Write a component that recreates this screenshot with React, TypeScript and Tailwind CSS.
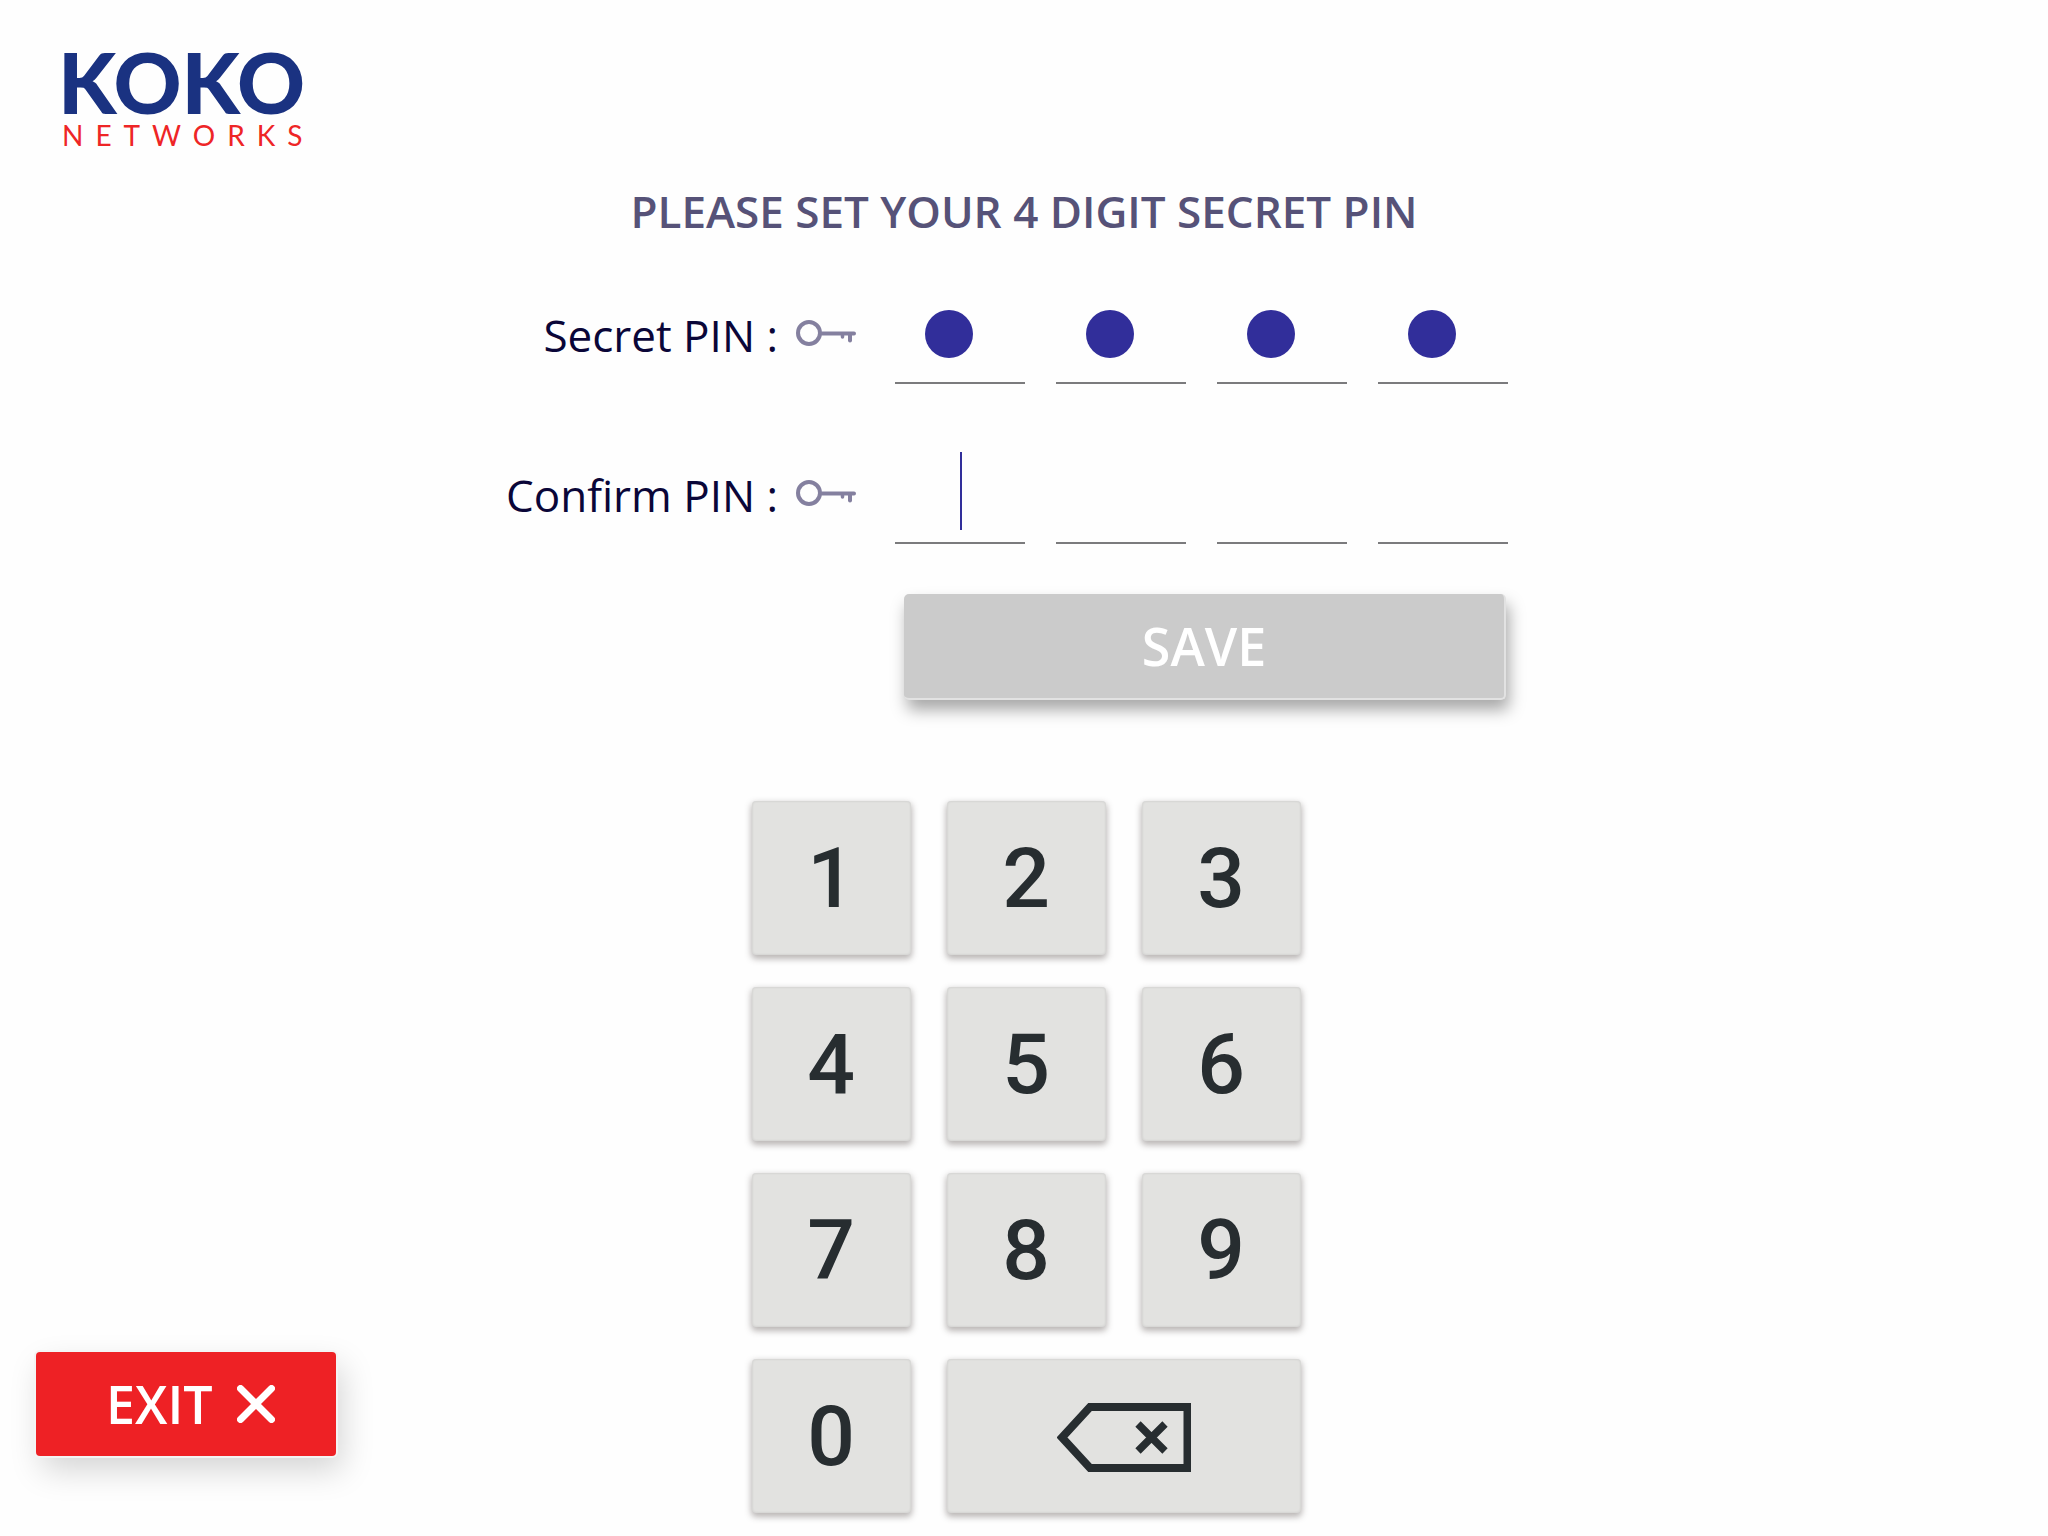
import { useState } from "react";

function Logo() {
  return (
    <a href="#" aria-label="KOKO Networks" className="flex w-fit flex-col pt-[43px] pl-[58px] font-['Lato']">
      <span className="text-[84px] leading-[78px] font-black text-[#1a3281]">KOKO</span>
      <span className="pl-1 text-[28px] leading-[28px] tracking-[12px] text-[#ee2526]">NETWORKS</span>
    </a>
  );
}

function KeyIcon() {
  return (
    <svg viewBox="0 0 60 28" className="h-7 w-[60px]" fill="none" stroke="#84809f" aria-hidden="true">
      <circle cx="13" cy="13" r="11" strokeWidth="4" />
      <path d="M26 13.5H58" strokeWidth="4" strokeLinecap="round" />
      <path d="M46.5 14V17" strokeWidth="3.5" strokeLinecap="round" />
      <path d="M54 14V20.5" strokeWidth="4" strokeLinecap="round" />
    </svg>
  );
}

function PinRow({ id, label, value, active }: { id: string; label: string; value: string; active: boolean }) {
  return (
    <div className="flex items-center">
      <label htmlFor={`${id}-0`} className="w-[272px] pb-[2px] text-right text-[44px] leading-[60px] whitespace-nowrap text-[#0a0638]">
        {label}
      </label>
      <div className="mr-[39px] ml-[18px] pb-1">
        <KeyIcon />
      </div>
      <div className="grid grid-cols-4 gap-[31px]">
        {[0, 1, 2, 3].map((i) => (
          <div key={i} className="relative">
            <input
              id={`${id}-${i}`}
              type="password"
              readOnly
              value={value[i] ?? ""}
              aria-label={`${label} digit ${i + 1}`}
              className="block h-24 w-[130px] border-b-2 border-[#7b7b7d] bg-transparent text-transparent outline-none"
            />
            {value[i] && <span className="absolute top-[22px] left-[30px] size-12 rounded-full bg-[#312e9a]" />}
            {active && i === value.length && <span className="absolute top-1 left-[65px] h-[78px] w-[2px] bg-[#312e9a]" />}
          </div>
        ))}
      </div>
    </div>
  );
}

const keyStyle =
  "flex h-[154px] items-center justify-center rounded-[4px] bg-[#e2e2e0] pt-[2px] font-['Roboto'] text-[84px] leading-[84px] font-medium text-[#272d30] shadow-[0_3px_6px_1px_rgba(60,50,45,0.35),inset_0_0_2px_1px_rgba(0,0,0,0.06)]";

function Keypad({ onDigit, onBack }: { onDigit: (d: string) => void; onBack: () => void }) {
  return (
    <div className="grid grid-cols-[159px_159px_159px] gap-x-9 gap-y-8">
      {["1", "2", "3", "4", "5", "6", "7", "8", "9", "0"].map((d) => (
        <button key={d} type="button" onClick={() => onDigit(d)} className={keyStyle}>
          {d}
        </button>
      ))}
      <button type="button" aria-label="Backspace" onClick={onBack} className={`${keyStyle} col-span-2`}>
        <svg viewBox="0 0 134 69" className="h-[69px] w-[134px]" fill="none" stroke="#272d30" aria-hidden="true">
          <path d="M5 34.5L33 4H130.5V65H33Z" strokeWidth="8" />
          <path d="M81 21L108 48M108 21L81 48" strokeWidth="7.5" />
        </svg>
      </button>
    </div>
  );
}

export default function App() {
  const [confirm, setConfirm] = useState("");
  return (
    <div className="flex min-h-screen flex-col bg-[#fefefe] font-['Open_Sans',sans-serif]">
      <header className="h-[181px]">
        <Logo />
      </header>
      <main className="flex flex-1 flex-col items-center">
        <h1 className="text-[44px] leading-[60px] font-semibold text-[#565278]">PLEASE SET YOUR 4 DIGIT SECRET PIN</h1>
        <form className="mt-[47px] flex flex-col pr-[34px]" onSubmit={(e) => e.preventDefault()}>
          <div className="flex flex-col gap-16">
            <PinRow id="secret" label="Secret PIN :" value="1234" active={false} />
            <PinRow id="confirm" label="Confirm PIN :" value={confirm} active />
          </div>
          <button
            type="submit"
            className="mt-[50px] mr-[2px] h-[106px] w-[602px] self-end rounded-[5px] border-r-2 border-b-2 border-[#e2e2e2] bg-[#cbcbcb] text-[52px] leading-[70px] font-semibold text-white shadow-[3px_10px_16px_rgba(0,0,0,0.34)]"
          >
            SAVE
          </button>
        </form>
        <div className="mt-[101px] grid w-full grid-cols-[1fr_auto_1fr] pb-6">
          <button
            type="button"
            className="mb-[57px] ml-9 flex h-[104px] w-[300px] items-center gap-6 self-end rounded-[4px] bg-[#ee2125] pl-[70px] text-[52px] leading-[70px] font-semibold text-white shadow-[0_0_0_2px_#f4f4f4,6px_14px_32px_rgba(0,0,0,0.17)]"
          >
            EXIT
            <svg viewBox="0 0 38 38" className="size-[38px]" fill="none" stroke="white" strokeWidth="7" strokeLinecap="round" aria-hidden="true">
              <path d="M3.5 3.5L34.5 34.5M34.5 3.5L3.5 34.5" />
            </svg>
          </button>
          <div className="pl-1">
            <Keypad
              onDigit={(d) => setConfirm((c) => (c + d).slice(0, 4))}
              onBack={() => setConfirm((c) => c.slice(0, -1))}
            />
          </div>
        </div>
      </main>
    </div>
  );
}
